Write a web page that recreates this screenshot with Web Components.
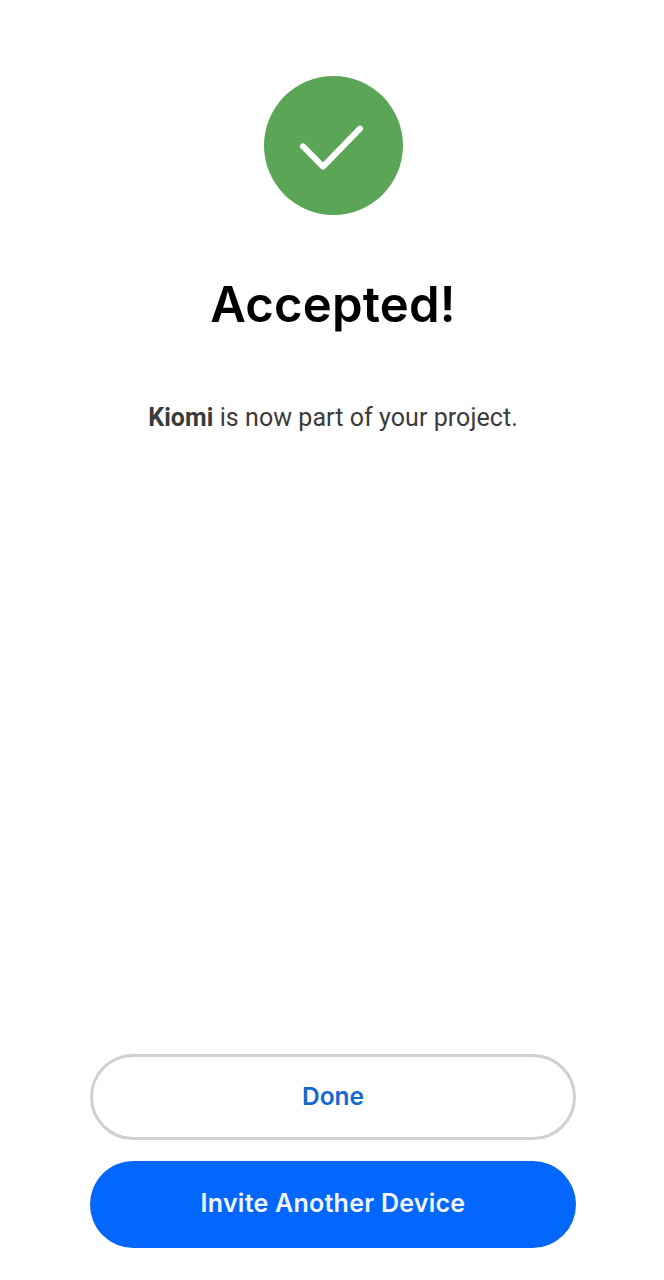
<!DOCTYPE html>
<html>
<head>
<meta charset="utf-8">
<title>Accepted</title>
<style>
  html, body { margin: 0; padding: 0; background: #fff; }
</style>
</head>
<body>
<success-screen>
  <span slot="title">Accepted!</span>
  <span slot="message"><b>Kiomi</b> is now part of your project.</span>
  <pill-button slot="actions" kind="outline">Done</pill-button>
  <pill-button slot="actions" kind="primary">Invite Another Device</pill-button>
</success-screen>

<script>
class checkBadge extends HTMLElement {
  constructor() {
    super();
    this.attachShadow({ mode: 'open' });
    this.shadowRoot.innerHTML = `
      <style>
        :host { display: block; width: 139px; height: 139px; }
        svg { display: block; }
      </style>
      <svg width="139" height="139" viewBox="0 0 139 139">
        <circle cx="69.5" cy="69.5" r="69.5" fill="#5aa656"/>
        <path d="M39 70.4 L59 90.6 L96 52.6" fill="none" stroke="#fff" stroke-width="6" stroke-linecap="round" stroke-linejoin="round"/>
      </svg>
    `;
  }
}
customElements.define('check-badge', checkBadge);

class pillButton extends HTMLElement {
  constructor() {
    super();
    this.attachShadow({ mode: 'open' });
    this.shadowRoot.innerHTML = `
      <style>
        :host {
          display: flex;
          align-items: center;
          justify-content: center;
          box-sizing: border-box;
          width: 486px;
          border-radius: 44px;
          padding-bottom: 2px;
          font-family: Inter, Roboto, sans-serif;
          font-size: 24.5px;
          font-weight: 600;
        }
        :host([kind="outline"]) {
          height: 86px;
          background: #fff;
          border: 3px solid #cfcfd6;
          color: #1568cf;
        }
        :host([kind="primary"]) {
          height: 87px;
          padding-bottom: 4px;
          background: #0366fd;
          color: #f2f7ff;
          font-size: 25px;
          letter-spacing: 0.25px;
        }
      </style>
      <slot></slot>
    `;
  }
}
customElements.define('pill-button', pillButton);

class successScreen extends HTMLElement {
  constructor() {
    super();
    this.attachShadow({ mode: 'open' });
    this.shadowRoot.innerHTML = `
      <style>
        :host {
          display: flex;
          flex-direction: column;
          align-items: center;
          box-sizing: border-box;
          height: 1280px;
          padding: 76px 0 32px 2px;
          background: #fff;
        }
        .title {
          margin-top: 58px;
          height: 64px;
          font: 600 49px/64px Inter, Roboto, sans-serif;
          letter-spacing: 0.2px;
          color: #000;
        }
        .message {
          margin-top: 64px;
          font: 400 25px/34px Roboto, "Liberation Sans", sans-serif;
          letter-spacing: 0.06px;
          color: #3b3b3b;
        }
        .actions {
          margin-top: auto;
          display: flex;
          flex-direction: column;
          gap: 21px;
        }
      </style>
      <check-badge></check-badge>
      <div class="title"><slot name="title"></slot></div>
      <div class="message"><slot name="message"></slot></div>
      <div class="actions"><slot name="actions"></slot></div>
    `;
  }
}
customElements.define('success-screen', successScreen);
</script>
</body>
</html>
